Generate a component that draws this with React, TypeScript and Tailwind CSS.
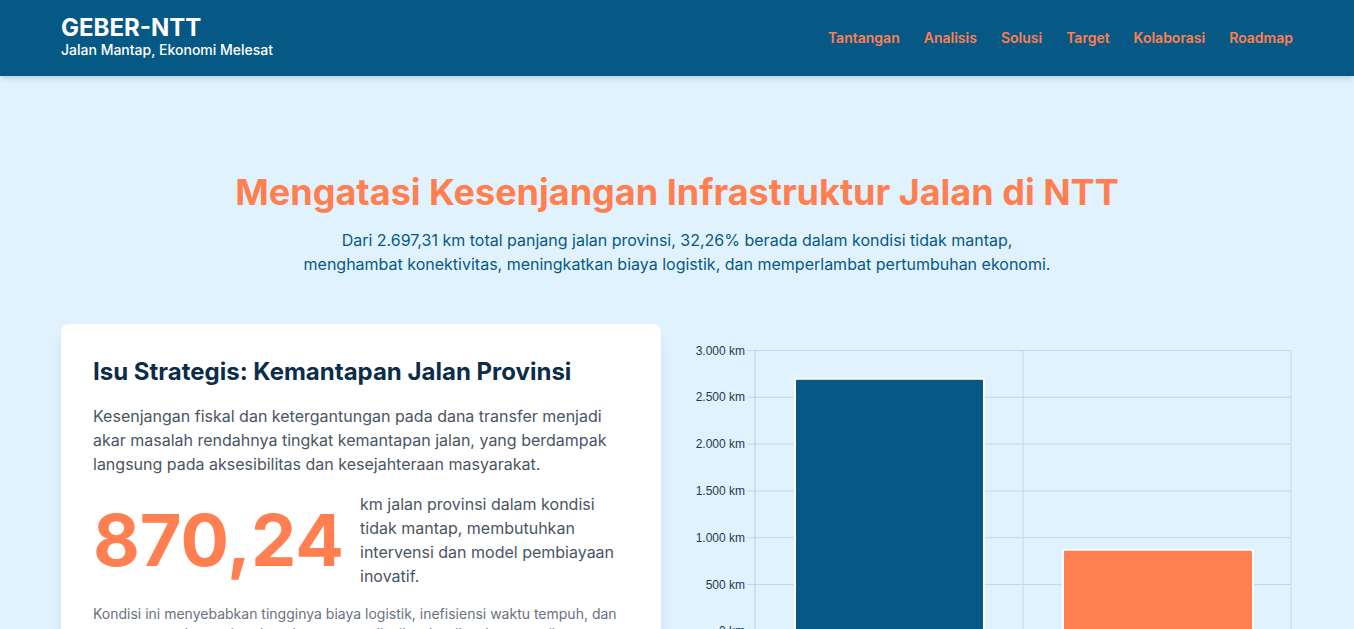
import React from "react";

const navItems = ["Tantangan", "Analisis", "Solusi", "Target", "Kolaborasi", "Roadmap"];

function Chart() {
  const axisX = 62;
  const right = 598;
  const top = 26.5;
  const unit = 46.8;
  const zeroY = top + unit * 6;
  const yFor = (v: number) => zeroY - (v / 500) * unit;
  const ticks = [3000, 2500, 2000, 1500, 1000, 500, 0];
  const labels = ["3.000 km", "2.500 km", "2.000 km", "1.500 km", "1.000 km", "500 km", "0 km"];
  const grid = "#c7d7e3";
  return (
    <svg width="600" height="360" viewBox="0 0 600 360" className="block">
      {ticks.map((t, i) => (
        <g key={t}>
          <line x1={axisX - 8} x2={right} y1={yFor(t)} y2={yFor(t)} stroke={grid} strokeWidth="1" />
          <text
            x={axisX - 10}
            y={yFor(t) + 4}
            textAnchor="end"
            fontSize="12"
            fill="#1e3a52"
            fontFamily="'Liberation Sans', Arial, sans-serif"
          >
            {labels[i]}
          </text>
        </g>
      ))}
      <line x1={axisX} x2={axisX} y1={top} y2={zeroY + 8} stroke="#b9cbd8" strokeWidth="1" />
      <line x1={330} x2={330} y1={top} y2={zeroY + 8} stroke={grid} strokeWidth="1" />
      <line x1={right} x2={right} y1={top} y2={zeroY + 8} stroke={grid} strokeWidth="1" />
      <path
        d={`M102 ${zeroY} V${yFor(2697.31) + 2} Q102 ${yFor(2697.31)} 104 ${yFor(2697.31)} H289 Q291 ${yFor(2697.31)} 291 ${yFor(2697.31) + 2} V${zeroY}`}
        fill="#075985"
        stroke="#ffffff"
        strokeWidth="2"
      />
      <path
        d={`M370 ${zeroY} V${yFor(870.24) + 2} Q370 ${yFor(870.24)} 372 ${yFor(870.24)} H558 Q560 ${yFor(870.24)} 560 ${yFor(870.24) + 2} V${zeroY}`}
        fill="#ff7f50"
        stroke="#ffffff"
        strokeWidth="2"
      />
    </svg>
  );
}

export default function App() {
  return (
    <div className="min-h-screen bg-[#e0f2fe] font-['Inter','Noto_Sans',sans-serif]">
      <header className="bg-[#075985] shadow-md">
        <div className="max-w-7xl mx-auto px-6 py-4 flex items-center justify-between">
          <div>
            <div className="text-2xl leading-6 font-bold text-white">GEBER-NTT</div>
            <div className="text-sm font-medium text-white">Jalan Mantap, Ekonomi Melesat</div>
          </div>
          <nav className="flex items-center gap-6">
            {navItems.map((n) => (
              <a key={n} className="text-sm font-semibold text-[#ff7f50]">
                {n}
              </a>
            ))}
          </nav>
        </div>
      </header>

      <main className="max-w-7xl mx-auto px-6 pt-24">
        <section className="text-center mb-12">
          <h1 className="text-4xl font-bold text-[#ff7f50] mb-4">
            Mengatasi Kesenjangan Infrastruktur Jalan di NTT
          </h1>
          <p className="max-w-3xl mx-auto text-base text-[#075985]">
            Dari 2.697,31 km total panjang jalan provinsi, 32,26% berada dalam kondisi tidak mantap,
            menghambat konektivitas, meningkatkan biaya logistik, dan memperlambat pertumbuhan ekonomi.
          </p>
        </section>

        <div className="grid grid-cols-2 gap-8">
          <div className="bg-white rounded-lg shadow-lg p-8">
            <h2 className="text-2xl font-bold text-[#0c2d48] mb-4">
              Isu Strategis: Kemantapan Jalan Provinsi
            </h2>
            <p className="text-base text-gray-600 mb-4">
              Kesenjangan fiskal dan ketergantungan pada dana transfer menjadi akar masalah rendahnya
              tingkat kemantapan jalan, yang berdampak langsung pada aksesibilitas dan kesejahteraan
              masyarakat.
            </p>
            <div className="flex items-center">
              <div className="text-7xl leading-none font-bold text-[#ff7f50] mr-4">870,24</div>
              <p className="text-base text-gray-600">
                km jalan provinsi dalam kondisi tidak mantap, membutuhkan intervensi dan model
                pembiayaan inovatif.
              </p>
            </div>
            <p className="text-sm text-gray-500 mt-4">
              Kondisi ini menyebabkan tingginya biaya logistik, inefisiensi waktu tempuh, dan
              menurunnya daya saing daerah, terutama di wilayah-wilayah terpencil.
            </p>
          </div>
          <div>
            <Chart />
          </div>
        </div>
      </main>
    </div>
  );
}
